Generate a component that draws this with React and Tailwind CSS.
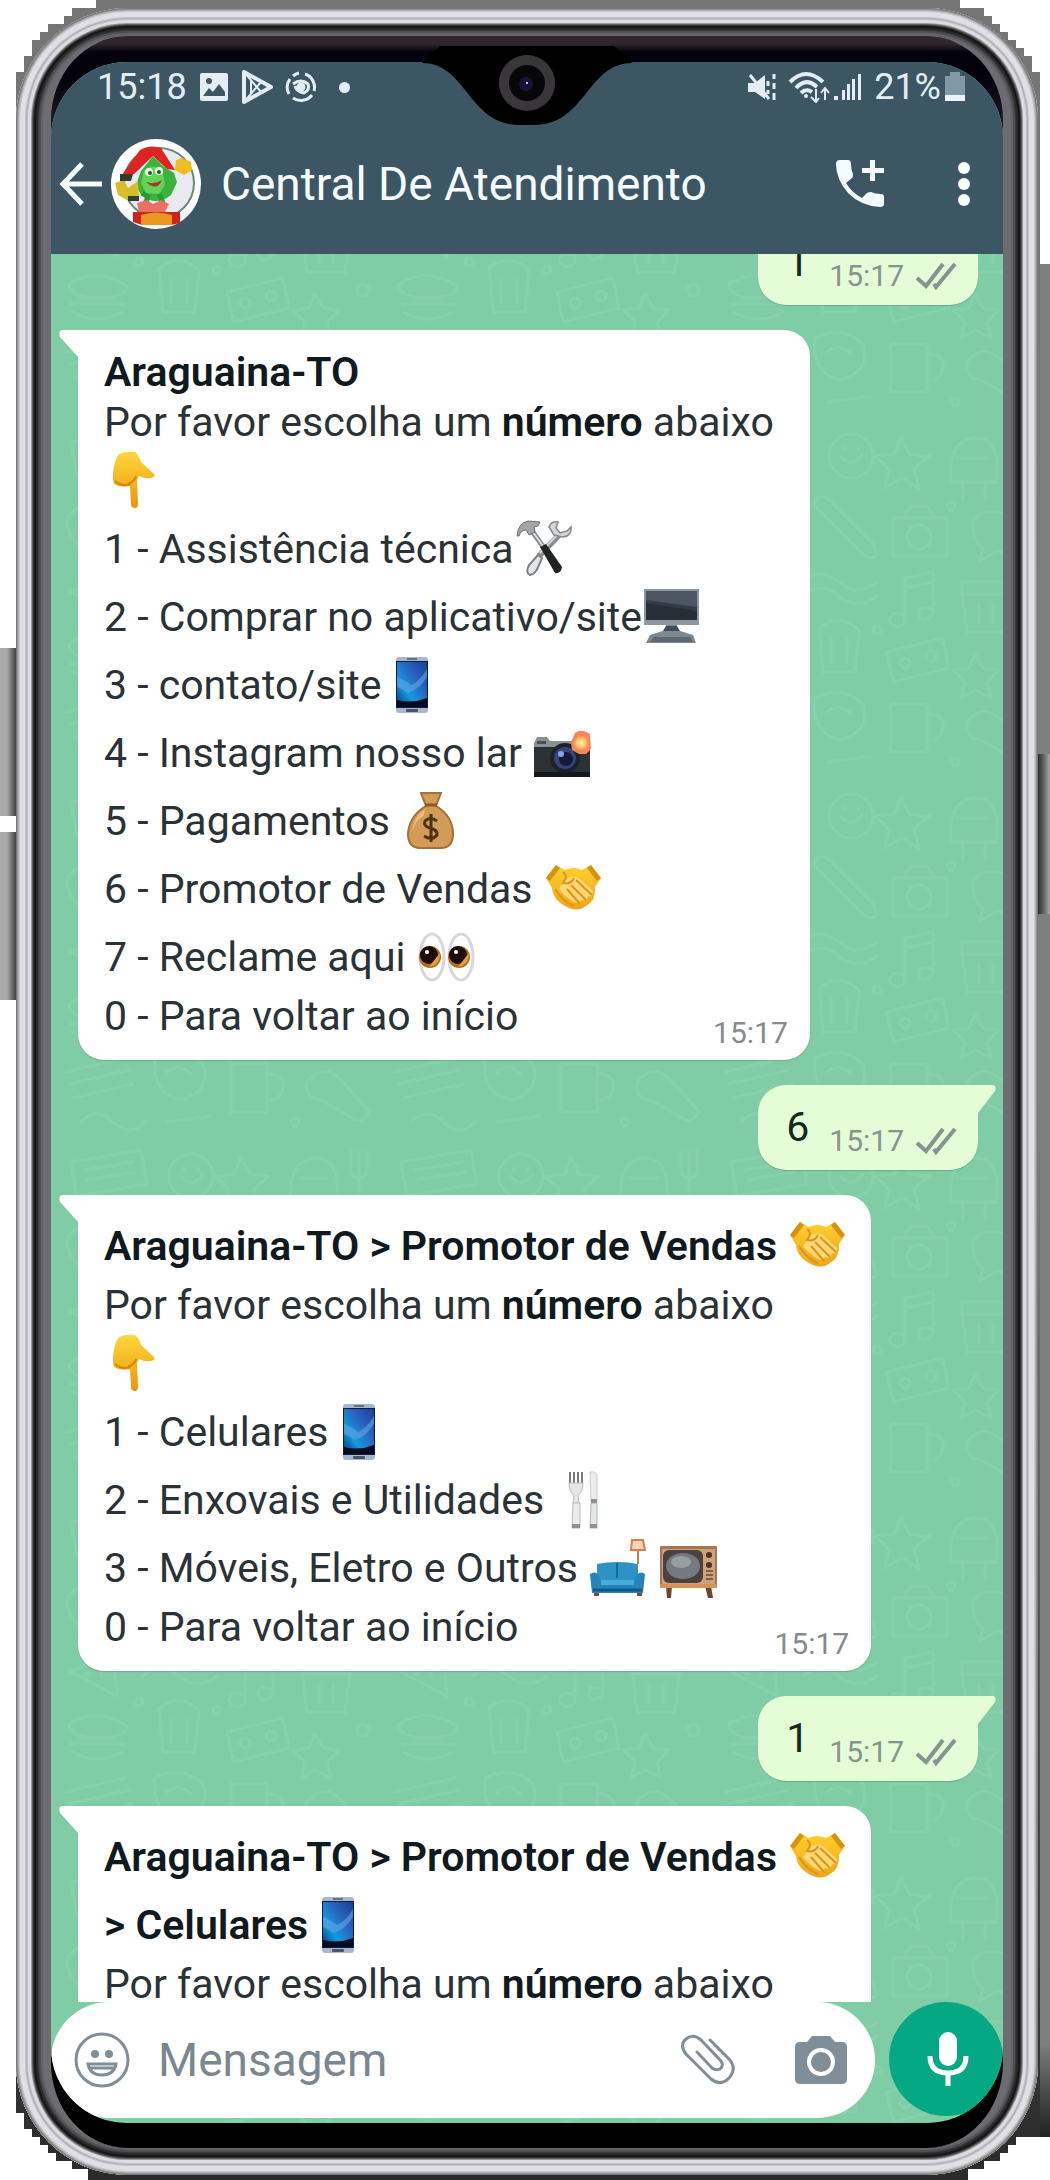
import React from "react";

/* ---------- emoji drawings (60 x 60 boxes) ---------- */

function Glyph({ label, w = 60, children }) {
  return (
    <svg role="img" aria-label={label} viewBox={`0 0 ${w} 60`} className="h-[60px] shrink-0">
      {children}
    </svg>
  );
}

const PointDown = () => (
  <Glyph label="Apontando para baixo">
    <defs>
      <linearGradient id="handG" x1="0" y1="0" x2="0" y2="1">
        <stop offset="0" stopColor="#ffd83c" />
        <stop offset="1" stopColor="#e9940c" />
      </linearGradient>
    </defs>
    <path
      d="M15 3 Q22 0 31 1 Q35 4 37 11 L49 22 Q53 26 47 27 Q41 28 35 25 L33 29 L34 53 Q34 57 31 57 Q27 57 27 53 L26 35 Q16 37 10 33 Q7 24 12 8 Z"
      fill="url(#handG)"
    />
    <path d="M11 30 Q18 36 26 33 M24 33 Q31 30 32 25" fill="none" stroke="#d98308" strokeWidth="2" />
  </Glyph>
);

const Tools = () => (
  <Glyph label="Ferramentas">
    <path d="M47 14 L25 37" stroke="#8a8d90" strokeWidth="6" />
    <path d="M46 13 L26 34" stroke="#d3d6d8" strokeWidth="2" />
    <path d="M35 8 Q37 2 44 3 L42 9 L46 14 L53 12 L57 8 Q58 17 49 18 L40 16 Z" fill="#d4d7d9" stroke="#85898c" strokeWidth="1.5" />
    <path d="M24 36 L15 46 Q11 54 16 56 Q22 55 25 46 L28 39 Z" fill="#e2e4e5" stroke="#7c8083" strokeWidth="2" />
    <path d="M18 12 L30 29" stroke="#85888a" strokeWidth="5" />
    <path d="M18 12 L29 27" stroke="#dcdedf" strokeWidth="2" />
    <path d="M26 28 L32 25 L48 48 Q47 55 41 54 Z" fill="#202224" />
    <path d="M3 17 Q4 4 14 2 L26 3 L24 7 L20 8 L21 13 L15 16 L12 11 Q7 11 5 17 Z" fill="#a2a6a9" stroke="#6e7275" strokeWidth="1" />
  </Glyph>
);

const Monitor = () => (
  <Glyph label="Computador">
    <path d="M8 48 L24 43 V38 H35 V43 L51 48 L54 56 H4 Z" fill="#7d8890" />
    <path d="M12 50 H48 L51 55 H8 Z" fill="#5e6870" />
    <path d="M24 39 H35 L38 44 H21 Z" fill="#424b53" />
    <path d="M2 2 H57 V38 H2 Z" fill="#8c979f" />
    <path d="M4 4 H55 V33 H4 Z" fill="#333c45" />
    <path d="M4 4 H55 V20 L4 13 Z" fill="#4b5660" />
    <path d="M4 16 L55 24 V33 H4 Z" fill="#262e36" />
  </Glyph>
);

const Phone = () => (
  <Glyph label="Celular" w={40}>
    <defs>
      <linearGradient id="phoneG" x1="1" y1="0" x2="0" y2="1">
        <stop offset="0" stopColor="#173f98" />
        <stop offset="0.35" stopColor="#2a5fbd" />
        <stop offset="0.7" stopColor="#139bdc" />
        <stop offset="1" stopColor="#0b3b86" />
      </linearGradient>
    </defs>
    <rect x="4" y="2" width="32" height="56" rx="3" fill="#aab7ca" />
    <rect x="4" y="6" width="32" height="47" fill="#0d1c45" />
    <rect x="5" y="7" width="30" height="42" fill="url(#phoneG)" />
    <path d="M5 22 Q15 26 19 30 Q28 26 35 14 V22 Q28 34 16 38 Q10 34 5 32 Z" fill="#5fa7e6" opacity=".6" />
    <path d="M5 45 Q20 49 35 43 V52 H5 Z" fill="#060b1d" />
    <rect x="15" y="3" width="10" height="2" fill="#65718a" />
    <rect x="14" y="54" width="12" height="3" rx="1" fill="#49546a" />
  </Glyph>
);

const CameraFlash = () => (
  <Glyph label="Câmera com flash">
    <defs>
      <radialGradient id="flashG">
        <stop offset="0" stopColor="#fff6c0" />
        <stop offset="0.5" stopColor="#ffc56c" />
        <stop offset="1" stopColor="#f4744a" stopOpacity=".6" />
      </radialGradient>
    </defs>
    <path d="M2 20 L5 14 H15 L18 18 H58 V53 H2 Z" fill="#8b9093" />
    <path d="M2 24 H58 V54 H2 Z" fill="#2d3134" />
    <path d="M2 49 H58 V54 H2 Z" fill="#15181a" />
    <circle cx="33" cy="35" r="15" fill="#1c212c" />
    <circle cx="33" cy="35" r="11" fill="#33457c" />
    <circle cx="34" cy="36" r="7" fill="#151a3c" />
    <circle cx="29" cy="31" r="3" fill="#8ba5dc" />
    <path d="M43 10 Q49 5 58 11 L59 26 L54 31 L47 31 L40 27 L39 19 Z" fill="#f3885f" />
    <circle cx="49" cy="20" r="9" fill="url(#flashG)" />
    <path d="M5 18 H14 V21 H5 Z" fill="#4a4f52" />
  </Glyph>
);

const MoneyBag = () => (
  <Glyph label="Saco de dinheiro">
    <path d="M21 2 H41 L36 15 Q53 25 53 43 Q53 56 42 57 H19 Q8 56 8 43 Q9 25 26 15 Z" fill="#d39b58" stroke="#a56f38" strokeWidth="2" />
    <path d="M25 18 Q13 26 12 42 Q14 31 24 24 Z" fill="#e9bd7c" />
    <path d="M25 14 H37" stroke="#8b5826" strokeWidth="3" />
    <path d="M37 30 Q30 25 25 30 Q23 35 30 37 Q38 39 37 44 Q32 50 24 45 M31 23 V51" fill="none" stroke="#4c3313" strokeWidth="3" />
  </Glyph>
);

const Handshake = () => (
  <Glyph label="Aperto de mãos">
    <defs>
      <linearGradient id="shakeG" x1="0" y1="0" x2="0" y2="1">
        <stop offset="0" stopColor="#ffd02c" />
        <stop offset="1" stopColor="#eda51b" />
      </linearGradient>
    </defs>
    <path d="M3 19 L13 6 L22 11 Q30 7 39 11 L48 6 L58 19 L52 28 Q53 42 43 47 Q35 53 26 49 Q10 42 9 29 Z" fill="url(#shakeG)" />
    <path d="M3 19 L13 6 L17 9 L7 22 Z M58 19 L48 6 L44 9 L54 22 Z" fill="#d5930f" />
    <path d="M23 20 Q30 15 37 20 L50 32 Q50 38 45 37 Q44 43 38 41 Q36 46 31 43 Q22 38 16 30 Z" fill="#ffd873" />
    <path d="M20 13 Q26 17 20 24 Q28 26 31 19 M33 21 L49 36 M28 26 L43 41 M24 30 L37 45 M12 30 Q20 43 31 47" fill="none" stroke="#dc9420" strokeWidth="2" />
  </Glyph>
);

const Eyes = () => (
  <Glyph label="Olhos">
    {[16, 45].map((x) => (
      <g key={x}>
        <ellipse cx={x} cy="30" rx="12" ry="23" fill="#fff" stroke="#dad6da" strokeWidth="3" />
        <circle cx={x - 2} cy="30" r="11" fill="#b16d1b" />
        <circle cx={x - 3} cy="28" r="9" fill="#1c0b08" />
        <path d={`M${x - 3} 40 Q${x + 8} 38 ${x + 8} 26 L${x + 4} 31 Z`} fill="#e5a136" />
        <circle cx={x - 5} cy="25" r="2" fill="#fff" />
      </g>
    ))}
  </Glyph>
);

const ForkKnife = () => (
  <Glyph label="Garfo e faca">
    <path d="M16 2 V14 M20 2 V14 M24 2 V14 M28 2 V14" stroke="#77797b" strokeWidth="2" />
    <path d="M15 13 H29 Q29 22 24 25 L25 33 H19 L20 25 Q15 22 15 13 Z" fill="#e4e6e7" stroke="#babdbf" strokeWidth="1" />
    <path d="M19 33 H26 V58 H18 Z" fill="#ececed" stroke="#b9bbbd" strokeWidth="1" />
    <path d="M36 2 Q43 1 43 6 V32 H37 Z" fill="#ebeced" stroke="#cccecf" strokeWidth="1" />
    <path d="M37 33 H43 V58 H36 Z" fill="#e3e5e6" stroke="#b1b4b6" strokeWidth="1" />
    <path d="M37 29 H43 V33 H37 Z M18 54 H26 V58 H18 Z M36 54 H43 V58 H36 Z" fill="#8e9193" />
  </Glyph>
);

const Couch = () => (
  <Glyph label="Sofá e luminária">
    <path d="M50 12 V26" stroke="#b97f55" strokeWidth="2" />
    <path d="M44 2 H55 L57 12 H43 Z" fill="#f9d6b4" stroke="#d7804d" strokeWidth="2" />
    <path d="M9 26 Q30 22 50 26 V44 H9 Z" fill="#2f92c4" />
    <path d="M29 25 V40" stroke="#1b6892" strokeWidth="2" />
    <path d="M2 36 Q8 32 11 38 L13 44 H46 L48 38 Q52 32 57 36 L55 55 H4 Z" fill="#2585b9" />
    <path d="M13 42 H46 V47 H13 Z" fill="#45abd9" />
    <path d="M5 52 H54" stroke="#15597f" strokeWidth="3" />
    <path d="M6 55 H11 V58 H6 Z M49 55 H54 V58 H49 Z" fill="#844a2f" />
  </Glyph>
);

const Television = () => (
  <Glyph label="Televisão">
    <path d="M8 48 H14 L13 60 H9 Z M47 48 H53 L55 60 H50 Z" fill="#6b4430" />
    <rect x="2" y="8" width="57" height="42" rx="1" fill="#a47455" />
    <rect x="4" y="11" width="53" height="35" fill="#cfa17b" />
    <rect x="5" y="12" width="40" height="33" rx="6" fill="#4b423f" />
    <ellipse cx="25" cy="28" rx="17" ry="13" fill="#767a7e" />
    <ellipse cx="23" cy="24" rx="10" ry="6" fill="#9a9ea2" />
    <circle cx="51" cy="17" r="3" fill="#4c3327" />
    <circle cx="51" cy="27" r="3" fill="#4c3327" />
    <path d="M48 33 H55 M48 37 H55 M48 41 H55" stroke="#865b40" strokeWidth="2" />
    <path d="M2 46 H59 V50 H2 Z" fill="#d59356" />
  </Glyph>
);

/* ---------- interface icons ---------- */

const Ticks = () => (
  <svg viewBox="0 0 42 28" className="h-7 w-[42px]" fill="none" stroke="#84948f" strokeWidth="4" aria-label="Entregue">
    <path d="M1 16 L10 24 L27 2 M18 22 L20 25 L39 2" />
  </svg>
);

function Avatar() {
  return (
    <svg viewBox="0 0 90 90" className="size-[90px]" role="img" aria-label="Foto da Central">
      <circle cx="45" cy="45" r="45" fill="#fff" />
      <circle cx="48" cy="44" r="35" fill="#e9eaf1" stroke="#668a73" strokeWidth="2" />
      <path d="M10 37 L29 11 Q39 5 50 9 L64 31 L56 30 L42 17 L23 35 Z" fill="#dc2420" />
      <path d="M42 17 L52 27 L63 34 L66 43 L60 56 Q45 68 30 56 L25 46 L30 32 Z" fill="#3cb23c" />
      <path d="M33 32 Q42 22 52 34 L54 46 L48 55 L35 54 L30 44 Z" fill="#63d45b" />
      <path d="M65 21 L71 19 L80 23 L81 31 L73 36 L64 31 Z" fill="#f1bd1c" />
      <path d="M4 44 L13 41 L17 49 L27 42 L28 57 L16 61 L7 56 Z" fill="#d8bd29" />
      <path d="M9 35 H22 L20 42 H9 Z" fill="#333b34" />
      <circle cx="38" cy="33" r="4" fill="#eafbe6" />
      <circle cx="48" cy="32" r="4" fill="#eafbe6" />
      <circle cx="39" cy="34" r="2" fill="#1b5b29" />
      <circle cx="48" cy="33" r="2" fill="#1b5b29" />
      <path d="M35 43 Q44 46 51 41 Q46 53 35 43 Z" fill="#ad3326" />
      <path d="M31 54 L37 58 L34 65 M48 55 L52 64" stroke="#2b9a35" strokeWidth="5" fill="none" />
      <path d="M17 57 H28 V62 H17 Z" fill="#334038" />
      <path d="M26 64 L36 61 L42 65 L50 61 L58 65 L54 73 H28 Z" fill="#e87065" />
      <path d="M22 73 H69 V84 L60 86 H31 L22 83 Z" fill="#c9251e" />
      <path d="M30 76 Q45 71 61 76 V86 H30 Z" fill="#ec9520" />
    </svg>
  );
}

function StatusBar() {
  return (
    <div className="flex h-[50px] items-center justify-between pr-[38px] pl-[46px] text-[#e2eef4]">
      <div className="flex items-center">
        <span className="text-[36px] leading-none">15:18</span>
        <svg viewBox="0 0 30 30" className="ml-3 size-[30px]">
          <path d="M3 1 H27 Q29 1 29 3 V27 Q29 29 27 29 H3 Q1 29 1 27 V3 Q1 1 3 1 Z" fill="currentColor" />
          <circle cx="10" cy="9" r="3" fill="#3d5663" />
          <path d="M4 24 L10 16 L14 20 L20 12 L26 20 V24 Z" fill="#3d5663" />
        </svg>
        <svg viewBox="0 0 32 34" className="ml-3 h-[34px] w-8" fill="none" stroke="currentColor" strokeWidth="4" strokeLinejoin="round">
          <path d="M3 2 V32 L30 17 Z" />
          <path d="M3 2 L20 22 M3 32 L20 12 M10 11 V23" strokeWidth="2" />
        </svg>
        <svg viewBox="0 0 32 32" className="ml-3 size-8" fill="none" stroke="currentColor" strokeWidth="3">
          <path d="M20 3 A14 14 0 0 1 29 20 M27 24 A14 14 0 0 1 8 27 M4 23 A14 14 0 0 1 5 8 M8 5 A14 14 0 0 1 14 2" />
          <path d="M8 13 Q16 7 23 13 Q25 19 19 22 Q12 21 10 15" />
          <circle cx="16" cy="16" r="3" fill="currentColor" />
        </svg>
        <span className="ml-[22px] size-[11px] rounded-full bg-current" />
      </div>
      <div className="flex items-center">
        <svg viewBox="0 0 30 30" className="size-[30px]" fill="currentColor">
          <path d="M1 11 H8 L18 3 V27 L8 20 H1 Z" />
          <path d="M3 3 L22 27 M21 9 V14 M21 18 V22 M27 2 V7 M27 11 V17 M27 21 V28" stroke="currentColor" strokeWidth="3" />
        </svg>
        <svg viewBox="0 0 42 32" className="ml-[11px] h-8 w-[42px]" fill="none" stroke="currentColor" strokeWidth="4">
          <path d="M2 11 Q18 -5 35 11 M8 17 Q18 6 29 16 M13 22 Q18 17 24 21" />
          <circle cx="18" cy="25" r="2" fill="currentColor" stroke="none" />
          <path d="M28 18 V30 M23 26 L28 31 L31 27 M37 29 V18 M33 22 L37 17 L41 22" strokeWidth="2" />
        </svg>
        <svg viewBox="0 0 28 28" className="ml-1 size-7" fill="currentColor">
          <path d="M0 23 H4 V27 H0 Z M8 17 H11 V27 H8 Z M13 11 H16 V27 H13 Z M18 6 H21 V27 H18 Z M24 1 H27 V27 H24 Z" />
        </svg>
        <span className="ml-3 text-[36px] leading-none">21%</span>
        <svg viewBox="0 0 20 30" className="ml-1 h-[30px] w-5">
          <path d="M5 0 H15 V4 H20 V24 H0 V4 H5 Z" fill="#8198a5" />
          <path d="M0 23 H20 V29 H0 Z" fill="#e9f3f8" />
        </svg>
      </div>
    </div>
  );
}

function Header() {
  return (
    <header className="bg-[#3d5663]">
      <StatusBar />
      <div className="flex h-[142px] items-center pt-0.5 pr-8 pl-2 text-[#f3fbff]">
        <button type="button" aria-label="Voltar" className="flex">
          <svg viewBox="0 0 44 44" className="size-11" fill="none" stroke="currentColor" strokeWidth="5">
            <path d="M43 22 H5 M23 2 L4 22 L23 42" />
          </svg>
        </button>
        <span className="ml-2 flex">
          <Avatar />
        </span>
        <h1 className="ml-5 flex-1 text-[46px] leading-none">Central De Atendimento</h1>
        <button type="button" aria-label="Ligar" className="flex">
          <svg viewBox="0 0 50 50" className="size-[50px]" fill="currentColor">
            <path d="M1 5 Q1 1 5 1 H13 Q16 1 16 5 Q16 11 18 15 Q18 18 17 19 L11 24 Q17 34 27 39 L32 34 Q34 33 36 33 Q40 35 46 35 Q49 35 49 38 V45 Q49 48 45 48 Q26 47 13 34 Q1 20 1 5 Z" />
            <path d="M35 1 H40 V9 H49 V14 H40 V22 H35 V14 H27 V9 H35 Z" />
          </svg>
        </button>
        <button type="button" aria-label="Mais opções" className="ml-[72px] flex">
          <svg viewBox="0 0 14 46" className="h-[46px] w-3.5" fill="currentColor">
            <circle cx="7" cy="7" r="6" />
            <circle cx="7" cy="23" r="6" />
            <circle cx="7" cy="39" r="6" />
          </svg>
        </button>
      </div>
    </header>
  );
}

/* ---------- chat ---------- */

function Wallpaper() {
  return (
    <svg aria-hidden="true" className="absolute inset-0 size-full">
      <defs>
        <pattern id="doodles" width="330" height="360" patternUnits="userSpaceOnUse">
          <g fill="none" stroke="#91dab5" strokeWidth="3" strokeLinecap="round" strokeLinejoin="round" opacity=".4">
            <path d="M20 20 L90 8 L96 42 L26 54 Z M34 28 L82 20 M36 38 L84 30" />
            <circle cx="140" cy="34" r="22" />
            <path d="M130 34 Q140 48 152 32 M133 26 V28 M147 26 V28" />
            <path d="M190 14 L198 32 L218 34 L203 47 L208 66 L190 56 L174 66 L178 47 L164 34 L184 32 Z" />
            <path d="M240 60 Q236 20 262 16 Q290 14 286 60 Z M252 60 V76 M274 60 V76 M250 36 H276" />
            <path d="M308 10 V56 M300 10 V28 Q300 36 308 36 Q316 36 316 28 V10" />
            <path d="M16 96 Q30 76 48 94 Q66 76 78 98 Q80 120 48 138 Q16 122 16 96 Z" />
            <path d="M104 84 L154 134 M116 76 L162 122 Q172 140 154 134 M104 84 Q102 72 116 76" />
            <path d="M182 96 H236 V134 H182 Z M192 96 L200 84 H216 L224 96" />
            <circle cx="208" cy="115" r="12" />
            <path d="M262 104 Q262 90 282 90 Q306 90 308 110 Q308 130 284 130 L268 140 L272 126 Q262 120 262 104 Z" />
            <path d="M20 170 L62 150 L66 194 Z M34 172 H38 M50 168 V174" />
            <path d="M92 160 Q110 144 128 160 T166 160 M92 174 Q110 158 128 174 T166 174" />
            <path d="M194 156 V196 Q194 206 184 204 Q174 200 182 192 Q188 190 194 194 M194 156 L222 150 V188 Q222 198 212 198 Q204 194 210 186 Q216 184 222 188 M194 166 L222 160" />
            <path d="M250 160 H300 L294 210 H256 Z M250 172 H300 M268 182 V200 M282 182 V200" />
            <path d="M18 222 Q46 204 76 224 Q76 236 46 236 Q18 236 18 222 Z M20 242 H74 M22 250 Q46 264 72 250" />
            <path d="M108 206 Q128 190 148 208 L144 250 H112 Z M120 218 V240 M136 218 V240" />
            <path d="M176 230 L232 216 L238 246 L182 260 Z" />
            <circle cx="194" cy="241" r="5" />
            <circle cx="220" cy="234" r="5" />
            <path d="M264 232 L272 246 L288 248 L276 260 L280 276 L264 268 L250 276 L254 260 L242 248 L258 246 Z" />
            <path d="M14 290 L74 276 M18 302 L78 288 M22 316 L82 302" />
            <path d="M104 276 Q130 262 152 282 Q160 310 130 318 Q100 312 104 276 Z M116 290 Q128 280 140 292" />
            <path d="M180 282 V330 H216 V282 Z M216 292 Q234 292 232 306 Q230 320 216 318" />
            <path d="M256 300 Q272 280 290 298 L318 330 Q310 344 298 334 L270 318 Q254 318 256 300 Z" />
            <path d="M30 340 Q46 324 62 340 T94 340 M116 340 L160 334" />
            <circle cx="92" cy="66" r="5" />
            <circle cx="240" cy="84" r="4" />
            <circle cx="88" cy="200" r="4" />
            <circle cx="166" cy="208" r="4" />
            <circle cx="312" cy="228" r="6" />
            <circle cx="244" cy="340" r="4" />
          </g>
        </pattern>
      </defs>
      <rect width="100%" height="100%" fill="url(#doodles)" />
    </svg>
  );
}

function Line({ children, tall, bold }) {
  return (
    <p
      className={
        "flex items-center whitespace-pre " + (tall ? "h-[68px] " : "h-[50px] ") + (bold ? "font-semibold text-[#10191d]" : "")
      }
    >
      {children}
    </p>
  );
}

const Prompt = () => (
  <Line>
    Por favor escolha um <strong className="font-semibold text-[#10191d]">número</strong> abaixo
  </Line>
);

function Received({ children, time, wide }) {
  return (
    <article
      className={
        "relative w-fit rounded-[26px] rounded-tl-none bg-white pt-[17px] pb-[19px] pl-[26px] shadow-[0_1px_1px_rgba(40,110,75,0.3)] " +
        (wide ? "pr-9" : "pr-6")
      }
    >
      <svg aria-hidden="true" viewBox="0 0 20 28" className="absolute top-0 -left-[19px] h-7 w-5">
        <path d="M20 0 H3 Q-1 1 1 7 L20 28 Z" fill="#fff" />
      </svg>
      {children}
      {time && <time className="absolute right-[22px] bottom-[9px] text-[30px] leading-[36px] text-[#848b90]">{time}</time>}
    </article>
  );
}

function Sent({ text, time }) {
  return (
    <article className="relative mr-[25px] flex h-[85px] w-fit items-start self-end rounded-[28px] rounded-tr-none bg-[#e4fdd6] pt-[17px] pr-5 pl-7 shadow-[0_1px_1px_rgba(40,110,75,0.3)]">
      <svg aria-hidden="true" viewBox="0 0 20 28" className="absolute top-0 -right-[18px] h-7 w-5">
        <path d="M0 0 H17 Q21 1 19 6 L2 28 H0 Z" fill="#e4fdd6" />
      </svg>
      <p className="h-[50px] leading-[50px] text-[#152a1a]">{text}</p>
      <div className="mt-[21px] ml-5 flex items-center gap-3">
        <time className="text-[30px] leading-[36px] text-[#84948f]">{time}</time>
        <Ticks />
      </div>
    </article>
  );
}

function Chat() {
  return (
    <main className="relative min-h-0 flex-1 overflow-hidden">
      <div className="-mt-[34px] flex flex-col gap-[25px] pl-[27px] text-[41px] leading-[50px] text-[#2a3236]">
        <Sent text="1" time="15:17" />
        <Received time="15:17" wide>
          <Line bold>Araguaina-TO</Line>
          <Prompt />
          <Line tall><PointDown /></Line>
          <Line tall>1 - Assistência técnica<Tools /></Line>
          <Line tall>2 - Comprar no aplicativo/site<Monitor /></Line>
          <Line tall>3 - contato/site <Phone /></Line>
          <Line tall>4 - Instagram nosso lar <CameraFlash /></Line>
          <Line tall>5 - Pagamentos <MoneyBag /></Line>
          <Line tall>6 - Promotor de Vendas <Handshake /></Line>
          <Line tall>7 - Reclame aqui <Eyes /></Line>
          <Line>0 - Para voltar ao início</Line>
        </Received>
        <Sent text="6" time="15:17" />
        <Received time="15:17">
          <Line tall bold>Araguaina-TO &gt; Promotor de Vendas <Handshake /></Line>
          <Prompt />
          <Line tall><PointDown /></Line>
          <Line tall>1 - Celulares <Phone /></Line>
          <Line tall>2 - Enxovais e Utilidades <ForkKnife /></Line>
          <Line tall>3 - Móveis, Eletro e Outros <Couch />{"\u00a0"}<Television /></Line>
          <Line>0 - Para voltar ao início</Line>
        </Received>
        <Sent text="1" time="15:17" />
        <Received>
          <Line tall bold>Araguaina-TO &gt; Promotor de Vendas <Handshake /></Line>
          <Line tall bold>&gt; Celulares <Phone /></Line>
          <Prompt />
        </Received>
      </div>
    </main>
  );
}

function Composer() {
  return (
    <form className="relative flex h-[121px] items-start gap-[14px]" onSubmit={(e) => e.preventDefault()}>
      <div className="flex h-[116px] min-w-0 flex-1 items-center rounded-full bg-white pr-[27px] pl-[23px] text-[#7f8e98]">
        <button type="button" aria-label="Emojis" className="flex shrink-0">
          <svg viewBox="0 0 56 56" className="size-14" fill="none" stroke="currentColor" strokeWidth="3">
            <circle cx="28" cy="28" r="26" />
            <circle cx="21" cy="22" r="4" fill="currentColor" stroke="none" />
            <circle cx="35" cy="22" r="4" fill="currentColor" stroke="none" />
            <path d="M14 32 H42 Q40 43 28 43 Q16 43 14 32 Z" />
            <path d="M16 36 H40" />
          </svg>
        </button>
        <input
          type="text"
          aria-label="Mensagem"
          placeholder="Mensagem"
          className="ml-7 h-[60px] min-w-0 flex-1 bg-transparent text-[46px] text-[#2a3236] outline-none placeholder:text-[#7b878e]"
        />
        <button type="button" aria-label="Anexar" className="flex shrink-0">
          <svg viewBox="0 0 56 52" className="h-[52px] w-14" fill="none" stroke="currentColor" strokeWidth="3" strokeLinecap="round">
            <path d="M30 6 L49 25 Q57 34 50 43 Q41 53 31 45 L6 20 Q-1 11 6 5 Q13 -1 21 6 L41 27 Q44 32 40 35 Q36 37 32 34 L17 18" />
          </svg>
        </button>
        <button type="button" aria-label="Câmera" className="ml-[58px] flex shrink-0">
          <svg viewBox="0 0 54 50" className="h-[50px] w-[54px]">
            <path d="M18 1 H36 L41 7 H48 Q53 7 53 12 V44 Q53 49 48 49 H6 Q1 49 1 44 V12 Q1 7 6 7 H13 Z" fill="currentColor" />
            <circle cx="27" cy="27" r="12" fill="none" stroke="#fff" strokeWidth="4" />
          </svg>
        </button>
      </div>
      <button type="button" aria-label="Gravar áudio" className="flex size-[114px] shrink-0 items-center justify-center rounded-full bg-[#04a983] pl-1">
        <svg viewBox="0 0 42 56" className="h-14 w-[42px]" fill="none" stroke="#fff">
          <rect x="12" y="1" width="18" height="34" rx="9" fill="#fff" stroke="none" />
          <path d="M3 25 Q3 42 21 42 Q39 42 39 25 M21 42 V55" strokeWidth="5" />
        </svg>
      </button>
    </form>
  );
}

/* ---------- device ---------- */

const Notch = () => (
  <svg aria-hidden="true" viewBox="0 0 210 80" className="absolute top-[10px] left-1/2 h-20 w-[210px] -translate-x-1/2">
    <path d="M18 0 H192 L210 17 C165 17 164 79 112 79 H98 C46 79 45 17 0 17 Z" fill="#000" />
    <circle cx="105" cy="37" r="28" fill="#3a373a" />
    <circle cx="105" cy="37" r="18" fill="#070708" />
    <circle cx="104" cy="38" r="7" fill="#16133a" />
    <circle cx="105" cy="37" r="1" fill="#fff" />
  </svg>
);

export default function App() {
  return (
    <div className="relative h-screen overflow-hidden bg-white font-[Roboto,'Liberation_Sans',sans-serif]">
      <div className="absolute top-[648px] left-0 h-[168px] w-[18px] bg-linear-to-r from-[#a9a9a9] from-40% to-[#2d2d2d]" />
      <div className="absolute top-[832px] left-0 h-[168px] w-[18px] bg-linear-to-r from-[#a9a9a9] from-40% to-[#2d2d2d]" />
      <div className="absolute top-[264px] right-0 bottom-[43px] w-3 bg-linear-to-b from-[#7f7f7f] from-95% to-[#222]" />
      <div className="absolute top-[754px] right-0 z-10 h-[160px] w-3 bg-linear-to-r from-[#2d2d2d] to-[#a9a9a9]" />

      <div className="mr-[10px] ml-4 h-full bg-linear-to-b from-[#757575] via-[#7f7f7f] to-[#2b2b2b] pt-2 pr-0.5 pb-[5px] [clip-path:polygon(80px_0,80px_8px,56px_8px,56px_16px,48px_16px,48px_24px,32px_24px,32px_32px,24px_32px,24px_40px,16px_40px,16px_56px,8px_56px,8px_72px,0_72px,0_calc(100%-67px),8px_calc(100%-67px),8px_calc(100%-51px),16px_calc(100%-51px),16px_calc(100%-43px),24px_calc(100%-43px),24px_calc(100%-35px),32px_calc(100%-35px),32px_calc(100%-27px),40px_calc(100%-27px),40px_calc(100%-19px),56px_calc(100%-19px),56px_calc(100%-11px),72px_calc(100%-11px),72px_100%,calc(100%-72px)_100%,calc(100%-72px)_calc(100%-11px),calc(100%-56px)_calc(100%-11px),calc(100%-56px)_calc(100%-19px),calc(100%-40px)_calc(100%-19px),calc(100%-40px)_calc(100%-27px),calc(100%-32px)_calc(100%-27px),calc(100%-32px)_calc(100%-35px),calc(100%-24px)_calc(100%-35px),calc(100%-24px)_calc(100%-43px),100%_calc(100%-43px),100%_72px,calc(100%-8px)_72px,calc(100%-8px)_56px,calc(100%-16px)_56px,calc(100%-16px)_48px,calc(100%-24px)_48px,calc(100%-24px)_40px,calc(100%-32px)_40px,calc(100%-32px)_32px,calc(100%-40px)_32px,calc(100%-40px)_24px,calc(100%-48px)_24px,calc(100%-48px)_16px,calc(100%-56px)_16px,calc(100%-56px)_8px,calc(100%-80px)_8px,calc(100%-80px)_0)]">
        <div className="h-full rounded-[112px] p-[27px] shadow-[inset_0_0_0_1px_#7a7a7a,inset_0_0_0_2px_#929294,inset_0_0_0_3px_#b2b2b5,inset_0_0_0_4px_#cacace,inset_0_0_0_9px_#dfdfe5,inset_0_0_0_10px_#c4c4ca,inset_0_0_0_11px_#aeaeb4,inset_0_0_0_12px_#c2c2c8,inset_0_0_0_15px_#dcdce2,inset_0_0_0_16px_#96969a,inset_0_0_0_17px_#5c5c5f,inset_0_0_0_18px_#333,inset_0_0_0_20px_#171717,inset_0_0_0_22px_#2a2a2a,inset_0_0_0_23px_#3c3c3c,inset_0_0_0_25px_#505052,inset_0_0_0_28px_#646468]">
          <div className="relative flex h-full flex-col overflow-hidden rounded-[85px] border-x-8 border-t border-[#6d6c71] bg-black bg-[linear-gradient(#30262d_0,#30262d_8px,#03020d_16px,#02010c_40px,#30262d_110px,#000_160px)] pt-[26px] pb-[25px]">
            <div className="relative flex min-h-0 flex-1 flex-col overflow-hidden rounded-[76px] bg-[#7fcca5]">
              <Wallpaper />
              <div className="relative">
                <Header />
              </div>
              <Chat />
              <Composer />
            </div>
            <Notch />
          </div>
        </div>
      </div>
    </div>
  );
}
